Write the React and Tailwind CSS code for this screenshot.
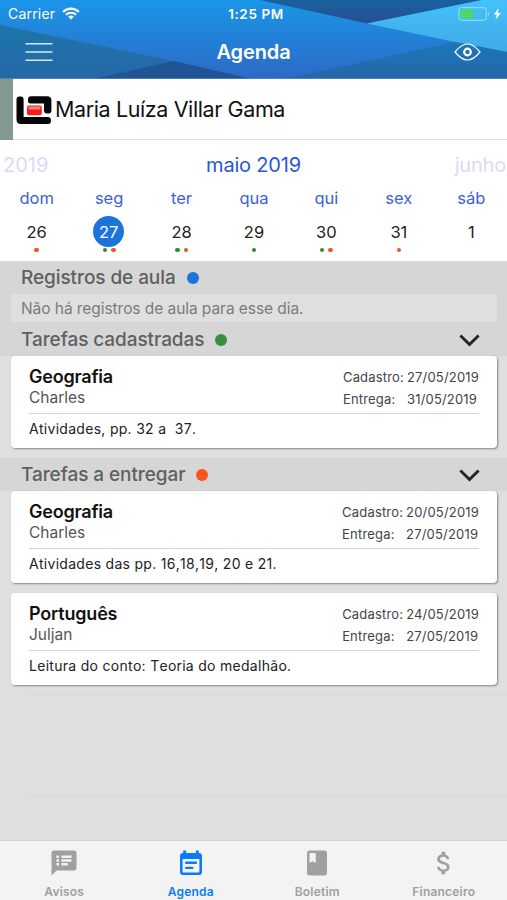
import { MdSpeakerNotes, MdClass, MdAttachMoney } from "react-icons/md";

const DAYS = [
  { name: "dom", day: "26", dots: ["o"] },
  { name: "seg", day: "27", dots: ["g", "o"], selected: true },
  { name: "ter", day: "28", dots: ["g", "o"] },
  { name: "qua", day: "29", dots: ["g"] },
  { name: "qui", day: "30", dots: ["g", "o"] },
  { name: "sex", day: "31", dots: ["o"] },
  { name: "sáb", day: "1", dots: [] },
];

function HeaderBackdrop() {
  return (
    <svg className="absolute inset-0" width="507" height="79" viewBox="0 0 507 79">
      <defs>
        <linearGradient id="base" x1="0" y1="0" x2="0" y2="1">
          <stop offset="0" stopColor="#1a96e8" />
          <stop offset="1" stopColor="#2d69c5" />
        </linearGradient>
        <linearGradient id="teal" gradientUnits="userSpaceOnUse" x1="0" y1="25" x2="0" y2="79">
          <stop offset="0" stopColor="#1d75ab" />
          <stop offset="1" stopColor="#2668a6" />
        </linearGradient>
        <linearGradient id="navy" x1="0" y1="0" x2="0" y2="1">
          <stop offset="0" stopColor="#18629f" />
          <stop offset="1" stopColor="#284e93" />
        </linearGradient>
        <linearGradient id="sky" gradientUnits="userSpaceOnUse" x1="0" y1="0" x2="0" y2="52">
          <stop offset="0" stopColor="#44c1fa" />
          <stop offset="1" stopColor="#41a9e6" />
        </linearGradient>
        <linearGradient id="deep" gradientUnits="userSpaceOnUse" x1="0" y1="42" x2="0" y2="79">
          <stop offset="0" stopColor="#1b78b9" />
          <stop offset="1" stopColor="#2566a8" />
        </linearGradient>
      </defs>
      <rect width="507" height="79" fill="url(#base)" />
      <polygon points="0,25 174,61 92,79 0,79" fill="url(#teal)" />
      <polygon points="92,79 174,61 252,79" fill="#205494" />
      <polygon points="260,0 367,23.5 482,0" fill="url(#navy)" />
      <polygon points="367,23.5 482,0 507,0 507,52 455,42" fill="url(#sky)" />
      <polygon points="285,79 455,42 507,52 507,79" fill="url(#deep)" />
      <rect y="78" width="507" height="1" fill="#5d9bd0" opacity="0.6" />
    </svg>
  );
}

function Header() {
  return (
    <header className="relative h-[79px] text-white">
      <HeaderBackdrop />
      <div className="relative flex h-[27px] items-center">
        <div className="flex w-[170px] items-center gap-[7px] pl-[8px]">
          <span className="text-[14px] leading-[27px] tracking-[0.2px]">Carrier</span>
          <svg width="18" height="13" viewBox="0 0 18 13" fill="none" stroke="#fff" strokeWidth="2.1">
            <path d="M1.2 4.9a11 11 0 0 1 15.6 0" />
            <path d="M4 7.8a7.1 7.1 0 0 1 10 0" />
            <path d="M9 12.6L6.2 9.8a4 4 0 0 1 5.6 0z" fill="#fff" stroke="none" />
          </svg>
        </div>
        <div className="flex-1 pl-[5px] pt-px text-center text-[13.5px] font-semibold leading-[26px] tracking-[0.6px]">1:25 PM</div>
        <div className="flex w-[170px] justify-end pr-[5px]">
          <svg width="44" height="14" viewBox="0 0 44 14">
            <rect x="0.9" y="0.7" width="27.4" height="12.6" rx="2.6" fill="none" stroke="#a3dcfa" strokeWidth="1" />
            <rect x="2.4" y="2.2" width="12.6" height="9.6" rx="0.8" fill="#4cd964" />
            <path d="M30 4.8q2 2.2 0 4.6z" fill="#a3dcfa" />
            <path d="M40.8 1.2L35.6 7.6h3.1l-1.2 5.2 5.3-6.7h-3.1z" fill="#fff" />
          </svg>
        </div>
      </div>
      <div className="relative flex h-[50px] items-center justify-between pl-[25px] pr-[26px]">
        <svg width="28" height="20" viewBox="0 0 28 20" stroke="#d3e7f6" strokeWidth="1.5">
          <path d="M0.500 1.750H27.500M0.500 10H27.500M0.500 18.250H27.500" />
        </svg>
        <h1 className="text-[20px] font-semibold leading-[24px] tracking-[-0.1px]">Agenda</h1>
        <svg width="27" height="18" viewBox="0 0 27 18" fill="none" stroke="#fff">
          <path d="M1 9C5.500 3.500 9.500 1 13.500 1S21.500 3.500 26 9C21.500 14.500 17.500 17 13.500 17S5.500 14.500 1 9z" strokeWidth="1.2" />
          <circle cx="13.500" cy="9" r="3.300" strokeWidth="2.200" />
        </svg>
      </div>
    </header>
  );
}

function Student() {
  return (
    <div className="flex h-[61px] items-center border-b border-[#e0e0e0] bg-white">
      <div className="h-[61px] w-[13px] bg-[#84988f]" />
      <svg className="ml-[3px] mt-[2px]" width="36" height="28" viewBox="0 0 36 28">
        <path d="M0.500 3.500Q0.500 0.500 3.500 0.500H5Q7.600 0.500 7.600 3.500V21H32Q35 21 35 24.500T32 28H5Q0.500 28 0.500 23.500z" fill="#050505" />
        <path d="M12 3.500Q12 0.300 15 0.300H31Q35.400 0.300 35.400 4.500V14.500Q35.400 17.500 32.500 17.500H31Q28 17.500 28 14.500V7.500H14.500Q12 7.500 12 5z" fill="#050505" />
        <rect x="11" y="9.500" width="14.800" height="9.800" rx="2" fill="#f51c1c" />
        <rect x="12.300" y="10.600" width="12.200" height="3" rx="1.400" fill="#ff7d76" />
      </svg>
      <div className="ml-[3px] text-[21.5px] leading-[28px] tracking-[-0.39px] text-[#111]">Maria Luíza Villar Gama</div>
    </div>
  );
}

function Calendar() {
  return (
    <section className="h-[121px] bg-white">
      <div className="flex h-[43px] items-center justify-between pl-[3px] pt-[7px] text-[20px] text-[#d9dbf7]">
        <span className="w-[100px]">2019</span>
        <span className="pr-[3px] tracking-[-0.2px] text-[#2a56d8]">maio 2019</span>
        <span className="w-[100px] pr-px text-right tracking-[-0.2px]">junho</span>
      </div>
      <div className="grid grid-cols-7">
        {DAYS.map((d) => (
          <div key={d.name} className="flex flex-col items-center">
            <div className="h-[33px] pl-px text-[16.5px] leading-[30px] text-[#3a62d8]">{d.name}</div>
            <div
              className={
                d.selected
                  ? "flex h-[31px] w-[31px] items-center justify-center rounded-full bg-[#1c74da] pt-px text-[16.5px] text-white"
                  : "flex h-[31px] w-[31px] items-center justify-center pl-px pt-px text-[16.5px] text-[#222]"
              }
            >
              {d.day}
            </div>
            <div className="flex h-[6px] items-center gap-[4px] pl-px">
              {d.dots.map((c) => (
                <i key={c} className={c === "g" ? "h-[4.500px] w-[4.500px] rounded-full bg-[#2e8b3d]" : "h-[4.500px] w-[4.500px] rounded-full bg-[#ee5426]"} />
              ))}
            </div>
          </div>
        ))}
      </div>
    </section>
  );
}

function Chevron() {
  return (
    <svg className="mt-px" width="21" height="13" viewBox="0 0 21 13" fill="none" stroke="#262626" strokeWidth="3">
      <path d="M1.400 1.500L10.500 10.500L19.600 1.500" />
    </svg>
  );
}

function SectionTitle({ text, dot, chevron }) {
  return (
    <div className="flex h-[33px] items-center bg-[#d6d6d6] pl-[21px] pr-[27px]">
      <span className="text-[19px] font-medium leading-[24px] tracking-[-0.08px] text-[#606060]">{text}</span>
      <i className={"ml-[11px] mr-auto h-[12px] w-[12px] rounded-full " + dot} />
      {chevron && <Chevron />}
    </div>
  );
}

function Card({ subject, teacher, created, due, text }) {
  return (
    <article className="ml-[11px] mr-[10px] h-[92px] rounded-[4px] bg-white px-[18px] pt-[9px] shadow-[1px_1px_2px_rgba(0,0,0,0.4)]">
      <div className="flex h-[49px] justify-between border-b border-[#d4d4d4]">
        <div>
          <h2 className="text-[18px] font-semibold leading-[24px] tracking-[-0.2px] text-[#111]">{subject}</h2>
          <p className="text-[15.5px] leading-[18px] text-[#555]">{teacher}</p>
        </div>
        <div className="pt-[2px] text-[13px] leading-[21.5px] tracking-[0.18px] text-[#444]">
          <div className="flex gap-[3px]">
            <span className="w-[61px]">Cadastro:</span>
            <span>{created}</span>
          </div>
          <div className="flex gap-[3px]">
            <span className="w-[61px]">Entrega:</span>
            <span>{due}</span>
          </div>
        </div>
      </div>
      <p className="whitespace-pre pt-[5px] text-[14px] leading-[20px] tracking-[0.29px] text-[#222] [font-kerning:none]">{text}</p>
    </article>
  );
}

function AgendaIcon() {
  return (
    <svg width="24" height="26" viewBox="0 0 24 26" fill="#0a7aff">
      <path fillRule="evenodd" d="M4.200 0.500h2.900v2.400h9.800v-2.400h2.900v2.400Q23 3 23 6v16q0 3-3 3H4q-3 0-3-3V6q0-3 3.200-3.100zM3.600 9v12.400q0 1.200 1.200 1.200h14.400q1.200 0 1.200-1.200V9z" />
      <rect x="6" y="11.600" width="12" height="2.300" rx="1" />
      <rect x="6" y="16.700" width="8.500" height="2.300" rx="1" />
    </svg>
  );
}

function Tab({ label, active, children }) {
  return (
    <div className={active ? "flex flex-1 flex-col items-center text-[#0a7aff]" : "flex flex-1 flex-col items-center text-[#a0a0a0]"}>
      <div className="flex h-[44px] items-center justify-center">{children}</div>
      <span className="text-[12px] font-semibold leading-[14px] tracking-[0.2px]">{label}</span>
    </div>
  );
}

export default function App() {
  return (
    <div className="flex h-[900px] w-[507px] flex-col overflow-hidden bg-[#dfdfdf] font-['Inter',sans-serif]">
      <Header />
      <Student />
      <Calendar />
      <main className="flex-1">
        <div className="bg-[#d6d6d6]">
          <SectionTitle text="Registros de aula" dot="bg-[#1c74da]" />
          <p className="ml-[11px] mr-[10px] h-[28px] bg-[#dfdfdf] pl-[10px] text-[15.5px] leading-[29px] tracking-[-0.06px] text-[#7b7b7b]">Não há registros de aula para esse dia.</p>
          <div className="pt-px">
            <SectionTitle text="Tarefas cadastradas" dot="bg-[#37903f]" chevron />
          </div>
        </div>
        <Card subject="Geografia" teacher="Charles" created="27/05/2019" due="31/05/2019" text="Atividades, pp. 32 a  37." />
        <div className="h-[10px]" />
        <SectionTitle text="Tarefas a entregar" dot="bg-[#fb5420]" chevron />
        <Card subject="Geografia" teacher="Charles" created="20/05/2019" due="27/05/2019" text="Atividades das pp. 16,18,19, 20 e 21." />
        <div className="h-[10px]" />
        <Card subject="Português" teacher="Juljan" created="24/05/2019" due="27/05/2019" text="Leitura do conto: Teoria do medalhão." />
        <div className="ml-[25px] mt-[9px] h-px bg-[#d8d8d8]" />
        <div className="ml-[28px] mt-[101px] h-px bg-[#d8d8d8]" />
      </main>
      <nav className="flex h-[60px] border-t border-[#d2d2d2] bg-[#f3f3f3] pl-px">
        <Tab label="Avisos"><MdSpeakerNotes size={30} /></Tab>
        <Tab label="Agenda" active><AgendaIcon /></Tab>
        <Tab label="Boletim"><MdClass size={30} /></Tab>
        <Tab label="Financeiro"><MdAttachMoney size={30} /></Tab>
      </nav>
    </div>
  );
}
